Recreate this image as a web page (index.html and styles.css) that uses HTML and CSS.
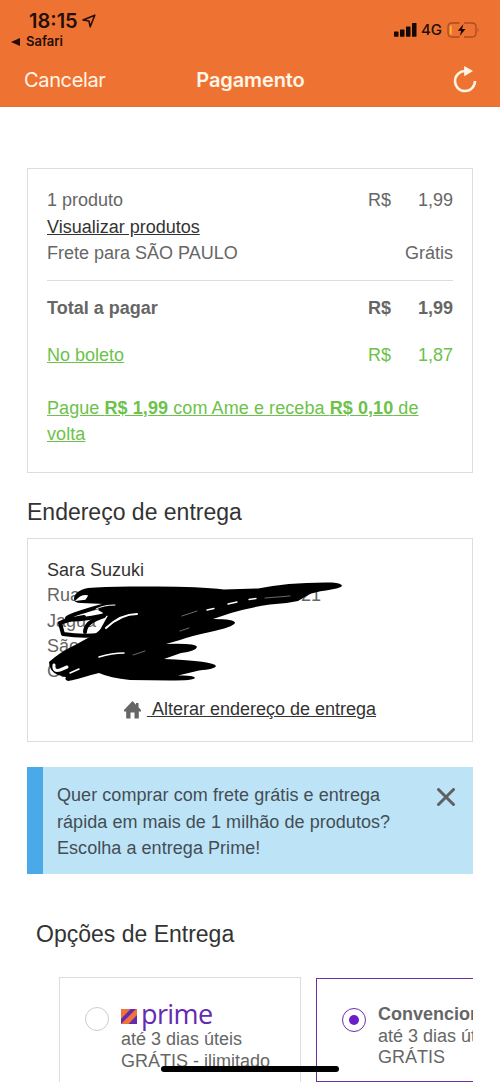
FILE: index.html
```html
<!DOCTYPE html>
<html lang="pt-BR">
  <head>
    <meta charset="UTF-8" />
    <meta name="viewport" content="width=device-width, initial-scale=1.0" />
    <title>Pagamento</title>
    <link rel="stylesheet" href="styles.css">
  </head>
  <body>
    <header class="topbar">
      <div class="status">
        <div class="status-left">
          <div class="clock">
            <span>18:15</span>
            <svg width="14" height="14" viewBox="0 0 14 14">
              <path d="M1 6 L12.8 1.2 L8.2 12.8 L7 7 Z" fill="none" stroke="#240f08" stroke-width="1.6" stroke-linejoin="round" />
            </svg>
          </div>
          <div class="back-app">
            <svg width="9" height="8" viewBox="0 0 9 8"><path d="M0 4 L9 0 V8 Z" fill="#240f08" /></svg>
            <span>Safari</span>
          </div>
        </div>
        <div class="status-right">
          <svg width="24" height="14" viewBox="0 0 24 14" fill="#160804">
            <rect x="0" y="8.5" width="4.5" height="5.2" rx=".6" />
            <rect x="6" y="6.5" width="4.5" height="7.2" rx=".6" />
            <rect x="12" y="3.5" width="4.5" height="10.2" rx=".6" />
            <rect x="18" y="0" width="4.5" height="13.7" rx=".6" />
          </svg>
          <span class="network">4G</span>
          <svg width="33" height="16" viewBox="0 0 33 16">
            <path d="M12.5 1 H5 Q1 1 1 5 V11 Q1 15 5 15 H12.5 M17 1 H25 Q29 1 29 5 V11 Q29 15 25 15 H17" fill="none" stroke="#a94d22" stroke-width="1.3" />
            <path d="M4.5 3.5 Q3 3.5 3 5 V11 Q3 12.5 4.5 12.5 Z" fill="#ffc928" />
            <path d="M16.5 2 L10.8 8.8 H14.2 L12.8 14 L18.5 7.1 H15 Z" fill="#160804" />
            <path d="M30.7 5.5 Q32.6 8 30.7 10.5 Z" fill="#a94d22" />
          </svg>
        </div>
      </div>
      <nav class="navbar">
        <a class="cancel">Cancelar</a>
        <h1 class="page-title">Pagamento</h1>
        <svg class="reload" width="24" height="28" viewBox="0 0 24 28">
          <path d="M12.5 5.1 A10 10 0 1 0 22 15" fill="none" stroke="#fff6e8" stroke-width="2.5" />
          <path d="M11.2 0 L20 4.9 L11.2 10.2 Z" fill="#fff6e8" />
        </svg>
      </nav>
    </header>

    <main class="content">
      <section class="card summary">
        <div class="row">
          <span>1 produto</span>
          <span class="price"><span>R$</span><span>1,99</span></span>
        </div>
        <div class="row"><a class="link">Visualizar produtos</a></div>
        <div class="row">
          <span>Frete para SÃO PAULO</span>
          <span>Grátis</span>
        </div>
        <div class="row total">
          <span>Total a pagar</span>
          <span class="price"><span>R$</span><span>1,99</span></span>
        </div>
        <div class="row green">
          <a class="underlined">No boleto</a>
          <span class="price"><span>R$</span><span>1,87</span></span>
        </div>
        <p class="ame green underlined">Pague <b>R$ 1,99</b> com Ame e receba <b>R$ 0,10</b> de volta</p>
      </section>

      <h2 class="heading">Endereço de entrega</h2>
      <section class="card address">
        <p class="name">Sara Suzuki</p>
        <p class="street"><span>Rua</span><span>21</span></p>
        <p>Jagua</p>
        <p>São</p>
        <p>CEP</p>
        <!-- rabisco sobre o endereço -->
        <svg class="scribble" width="300" height="104" viewBox="45 580 300 104">
          <path d="M74 599 Q74 591 88 588 Q105 586 145 586.500 Q195 586 224 589.500 L258 588.500 Q288 582 332 582.500 Q342 583 342 586 Q341 588 326 590.500 Q314 592 308 595 L298 601 Q285 604 270 604.500 Q247 608 231 613 L213 619 Q235 619 235 623 Q233 627 210 632 Q191 636 180 640 L166 644 Q196 643 197 647 Q196 651 181 653 L164 659 Q214 661 216 666 Q215 669 199 670.500 L178 675.500 Q195 675 195 678 Q194 680.500 170 680.500 L130 680 Q110 678 99 673 L91 675 Q75 680 68 681 Q64 680 66 677 L58 675 Q49 671 49 662 Q60 652 77 644 L95 634 L106 625 L110 617 L98 610 L104 604 L81 603 Q74 603 74 599 Z" />
          <g fill="none" stroke="#000" stroke-width="4" stroke-linecap="round" stroke-linejoin="round">
            <path d="M106 605 Q72 614 67 618 Q70 622 101 616 L114 611" />
            <path d="M84 617 Q66 620 60 623 L63 634 Q82 637 99 635 L112 627" />
            <path d="M104 616 Q85 622 85 632 M110 616 L100 634" />
          </g>
          <g fill="none" stroke="#fff" stroke-linecap="round">
            <path d="M77 600 Q82 595 87 596 L85 599 Z" stroke-width="1.500" fill="#fff" />
            <path d="M106 628 Q121 614 137 614" stroke-width="2" />
            <path d="M54 665 Q53 672 60 670 L67 667" stroke-width="3" />
            <path d="M70 673 L79 669" stroke-width="1.500" />
            <path d="M99 657 Q112 653 124 653" stroke-width="1.500" />
            <path d="M96 609 Q103 605 115 605" stroke-width="1" />
            <path d="M207 610 L214 608.500 M228 604 L237 602 M249 599.500 L256 598.500" stroke-width="1.300" />
            <path d="M265 598 L290 596 M133 655 L145 651 M182 616 L197 611 M180 631 L189 628" stroke-width=".6" opacity=".7" />
          </g>
        </svg>
        <div class="change-address">
          <svg width="17" height="18" viewBox="0 0 17 18" fill="#666">
            <path d="M8.500 0 L12 3.700 V2 H14.500 V6.300 L17 9 V10.500 H14.800 V17.500 H10.500 V11.500 H6.500 V17.500 H2.200 V10.500 H0 V9 Z" />
          </svg>
          <a class="link">&nbsp;Alterar endereço de entrega</a>
        </div>
      </section>

      <section class="prime-banner">
        <p>Quer comprar com frete grátis e entrega rápida em mais de 1 milhão de produtos? Escolha a entrega Prime!</p>
        <svg width="18" height="18" viewBox="0 0 18 18">
          <path d="M1.500 1.500 L16.500 16.500 M16.500 1.500 L1.500 16.500" stroke="#5f6065" stroke-width="3" stroke-linecap="round" />
        </svg>
      </section>

      <h2 class="heading options-heading">Opções de Entrega</h2>
      <section class="options">
        <div class="option">
          <span class="radio"></span>
          <div class="option-text">
            <div class="prime-logo">
              <svg width="16" height="15" viewBox="0 0 16 15">
                <rect width="16" height="15" fill="#f07438" />
                <path d="M0 10 L9.500 0 H15 L0 15 Z M7.500 15 L16 6 V15 Z" fill="#642ab0" />
              </svg>
              <span>prime</span>
            </div>
            <p>até 3 dias úteis</p>
            <p>GRÁTIS - ilimitado</p>
          </div>
        </div>
        <div class="option selected">
          <span class="radio"></span>
          <div class="option-text">
            <p><b>Convencional</b></p>
            <p>até 3 dias úteis</p>
            <p>GRÁTIS</p>
          </div>
        </div>
      </section>
    </main>
    <div class="home-indicator"></div>
  </body>
</html>
```
FILE: styles.css
```css
* {
  margin: 0;
  padding: 0;
  box-sizing: border-box;
}

body {
  height: 1082px;
  overflow: hidden;
  background: #fff;
  color: #666;
  font-family: "Liberation Sans", Arial, sans-serif;
  font-size: 18px;
  line-height: 26.5px;
}

svg {
  display: block;
  flex-shrink: 0;
}

/* topo */
.topbar {
  height: 107px;
  background: #ee7333;
  border-bottom: 1px solid #d9753f;
  font-family: Inter, sans-serif;
}

.status {
  display: flex;
  justify-content: space-between;
  height: 54px;
  padding: 10px 20px 0 11px;
  color: #240f08;
  font-weight: 600;
}

.clock {
  display: flex;
  align-items: center;
  gap: 4px;
  height: 22px;
  padding-left: 18px;
  font-size: 20px;
  line-height: 22px;
}

.back-app {
  display: flex;
  align-items: center;
  gap: 6px;
  font-size: 13px;
  line-height: 19px;
}

.status-right {
  display: flex;
  align-items: center;
  height: 40px;
}

.network {
  margin: 1px 5px 0 3px;
  font-size: 15px;
  font-weight: 500;
}

.navbar {
  display: grid;
  grid-template-columns: 1fr auto 1fr;
  align-items: center;
  height: 52px;
  padding: 0 23px 0 24px;
  color: #fff6e8;
  font-size: 20px;
}

.cancel {
  letter-spacing: -0.35px;
}

.page-title {
  font-size: 20px;
  font-weight: 600;
  letter-spacing: -0.1px;
}

.reload {
  justify-self: end;
}

.content {
  padding: 61px 27px 0;
}

.card {
  border: 1px solid #ddd;
  padding: 0 19px;
}

/* resumo do pedido */
.summary {
  height: 305px;
  padding-top: 18px;
}

.row {
  display: flex;
  justify-content: space-between;
}

.price {
  display: flex;
  justify-content: space-between;
  width: 85px;
}

.link {
  color: #333;
  text-decoration: underline;
}

.underlined {
  text-decoration: underline;
}

.total {
  margin: 13px 0 20.5px;
  padding-top: 14px;
  border-top: 1px solid #ddd;
  font-weight: bold;
}

.green {
  color: #6cc24a;
}

.ame {
  margin-top: 26.5px;
  letter-spacing: 0.08px;
}

.heading {
  margin-top: 25px;
  color: #333;
  font-size: 23px;
  font-weight: normal;
  line-height: 28px;
}

/* endereço */
.address {
  position: relative;
  height: 204px;
  margin-top: 12px;
  padding-top: 19px;
  line-height: 25.3px;
}

.name {
  color: #333;
}

.street {
  display: flex;
  justify-content: space-between;
  width: 274px;
}

.scribble {
  position: absolute;
  top: 41px;
  left: 17px;
}

.change-address {
  display: flex;
  align-items: center;
  justify-content: center;
  gap: 6px;
  margin-top: 13px;
}

.prime-banner {
  display: flex;
  justify-content: space-between;
  height: 107px;
  margin-top: 25px;
  padding: 15px 18px 0 14px;
  border-left: 16px solid #4aa9e9;
  background: #bce4f6;
  color: #444d55;
}

.prime-banner p {
  width: 345px;
  letter-spacing: 0.05px;
}

.prime-banner svg {
  margin-top: 6px;
}

/* opções de entrega */
.options-heading {
  margin-top: 46px;
  padding-left: 9px;
}

.options {
  display: flex;
  gap: 15px;
  height: 105px;
  margin-top: 29px;
  padding-left: 32px;
  overflow: hidden;
}

.option {
  display: flex;
  flex: none;
  gap: 12px;
  width: 242px;
  height: 120px;
  padding: 25px 0 0 25px;
  border: 1px solid #ddd;
  line-height: 21.5px;
  white-space: nowrap;
}

.option.selected {
  height: 104px;
  margin-top: 1px;
  border-color: #6b2fa8;
}

.radio {
  display: flex;
  align-items: center;
  justify-content: center;
  flex: none;
  width: 24px;
  height: 24px;
  margin-top: 4px;
  border: 1px solid #ccc;
  border-radius: 50%;
}

.selected .radio {
  border-color: #6b2fa8;
}

.selected .radio::before {
  content: "";
  width: 10px;
  height: 10px;
  border-radius: 50%;
  background: #6a1fc8;
}

.prime-logo {
  display: flex;
  align-items: center;
  gap: 4px;
  height: 26px;
  color: #642ab0;
  font-family: "Open Sans", sans-serif;
  font-size: 27px;
  letter-spacing: -0.6px;
}

.prime-logo span {
  padding-bottom: 5px;
}

.home-indicator {
  position: fixed;
  left: 161px;
  bottom: 10px;
  width: 178px;
  height: 6px;
  border-radius: 3px;
  background: #000;
}
```
